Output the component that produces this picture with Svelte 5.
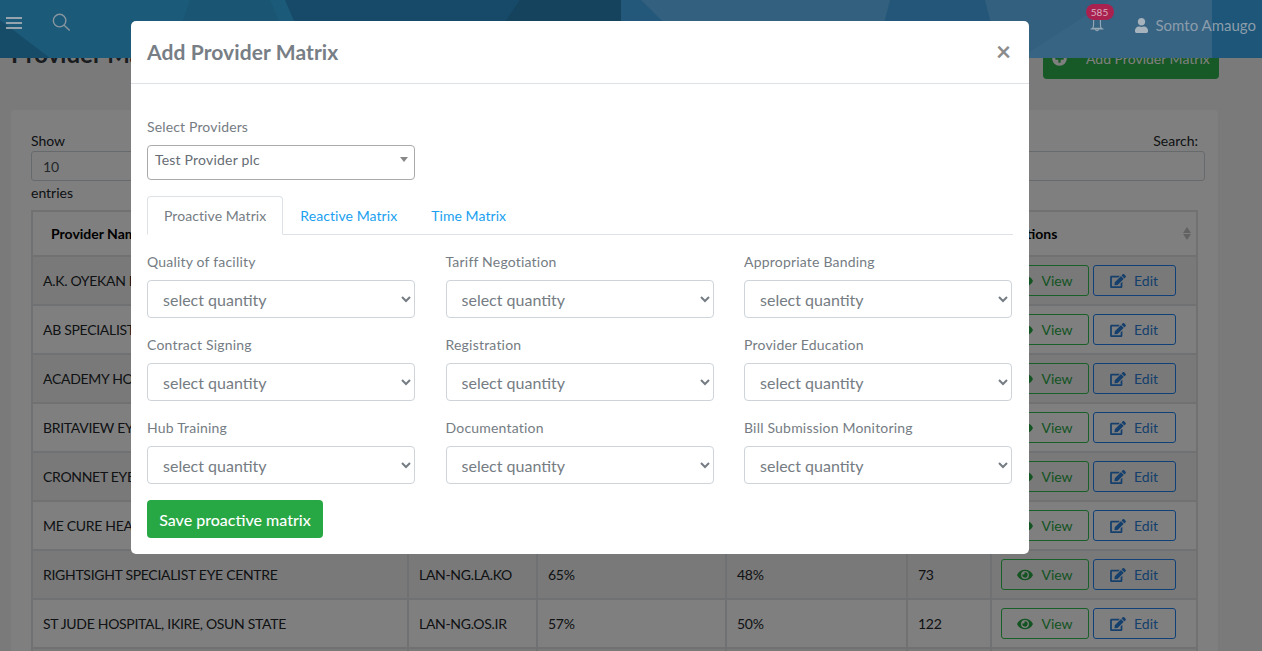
<script>
	const rows = [
		["A.K. OYEKAN EYE CLINIC", "LAN-NG.LA.AK", "62%", "54%", "88"],
		["AB SPECIALIST HOSPITAL", "LAN-NG.LA.AB", "71%", "43%", "64"],
		["ACADEMY HOSPITAL", "LAN-NG.LA.AC", "58%", "47%", "91"],
		["BRITAVIEW EYE CENTRE", "LAN-NG.LA.BR", "66%", "52%", "57"],
		["CRONNET EYE HOSPITAL", "LAN-NG.LA.CR", "60%", "49%", "102"],
		["ME CURE HEALTHCARE", "LAN-NG.LA.ME", "69%", "45%", "80"],
		["RIGHTSIGHT SPECIALIST EYE CENTRE", "LAN-NG.LA.KO", "65%", "48%", "73"],
		["ST JUDE HOSPITAL, IKIRE, OSUN STATE", "LAN-NG.OS.IR", "57%", "50%", "122"]
	]

	const fields = [
		"Quality of facility",
		"Tariff Negotiation",
		"Appropriate Banding",
		"Contract Signing",
		"Registration",
		"Provider Education",
		"Hub Training",
		"Documentation",
		"Bill Submission Monitoring"
	]
</script>

<div class="page">
	<header class="topbar">
		<svg class="topbar-bg" viewBox="0 0 1262 58" preserveAspectRatio="none" aria-hidden="true">
			<rect width="1262" height="58" fill="#1b5a78" />
			<polygon points="0,20 50,58 0,58" fill="#174c69" />
			<polygon points="190,0 270,0 295,58 170,58" fill="#1a5674" />
			<polygon points="285,0 621,0 621,58 310,58" fill="#174a68" />
			<polygon points="520,0 621,0 621,58 480,58" fill="#15425c" />
			<polygon points="621,0 875,0 840,58 621,58" fill="#24587a" />
			<polygon points="641,0 1212,0 1212,58 700,58" fill="#33607f" />
			<polygon points="890,0 985,0 1000,58 875,58" fill="#235678" />
			<polygon points="1020,58 1110,0 1212,0 1212,58" fill="#386483" />
			<rect x="1212" width="50" height="58" fill="#1d5678" />
		</svg>
		<div class="topbar-left">
			<span class="burger"><i></i><i></i><i></i></span>
			<svg class="search" viewBox="0 0 20 20" aria-hidden="true">
				<circle cx="8" cy="8" r="6.6" />
				<line x1="12.8" y1="12.8" x2="18.6" y2="18.4" />
			</svg>
		</div>
		<div class="topbar-right">
			<span class="bell">
				<svg viewBox="0 0 16 16" aria-hidden="true">
					<path d="M3.4 12.4c1-1 1.2-2 1.2-4V1h6.8v7.400c0 2 .2 3 1.200 4zM1.500 13h13M6.600 13.500c0 1.600 2.800 1.600 2.800 0" />
				</svg>
				<span class="badge">585</span>
			</span>
			<span class="user">
				<svg viewBox="0 0 448 512" aria-hidden="true">
					<path d="M224 256c70.700 0 128-57.300 128-128S294.700 0 224 0 96 57.300 96 128s57.300 128 128 128zm89.600 32h-16.700c-22.200 10.200-46.900 16-72.900 16s-50.600-5.800-72.900-16h-16.700C60.200 288 0 348.200 0 422.400V464c0 26.500 21.500 48 48 48h352c26.500 0 48-21.500 48-48v-41.600c0-74.200-60.200-134.400-134.400-134.400z" />
				</svg>
				Somto Amaugo
			</span>
		</div>
	</header>

	<main>
		<div class="title-row">
			<h1>Provider Matrix</h1>
			<button class="add-btn">
				<svg viewBox="0 0 512 512" aria-hidden="true">
					<path d="M256 8C119 8 8 119 8 256s111 248 248 248 248-111 248-248S393 8 256 8zm144 276c0 6.600-5.400 12-12 12h-92v92c0 6.600-5.400 12-12 12h-56c-6.600 0-12-5.400-12-12v-92h-92c-6.600 0-12-5.400-12-12v-56c0-6.600 5.400-12 12-12h92v-92c0-6.600 5.400-12 12-12h56c6.600 0 12 5.400 12 12v92h92c6.600 0 12 5.400 12 12v56z" />
				</svg>
				Add Provider Matrix
			</button>
		</div>

		<section class="card">
			<div class="controls">
				<div class="length">
					<span>Show</span>
					<div class="fake-input">10</div>
					<span class="entries">entries</span>
				</div>
				<div class="filter">
					<span>Search:</span>
					<div class="fake-input"></div>
				</div>
			</div>
			<table>
				<colgroup>
					<col style="width: 376px" />
					<col style="width: 129px" />
					<col style="width: 189px" />
					<col style="width: 181px" />
					<col style="width: 84px" />
					<col />
				</colgroup>
				<thead>
					<tr>
						<th>Provider Name</th>
						<th>Code</th>
						<th>Proactive</th>
						<th>Reactive</th>
						<th>Time</th>
						<th class="sortable">Actions<span class="sort"><i></i><i></i></span></th>
					</tr>
				</thead>
				<tbody>
					{#each rows as row}
						<tr>
							{#each row as cell}
								<td>{cell}</td>
							{/each}
							<td class="actions">
								<button class="outline view">
									<svg viewBox="0 0 576 512" aria-hidden="true">
										<path d="M572.520 241.400C518.290 135.590 410.930 64 288 64S57.680 135.640 3.480 241.410a32.350 32.350 0 0 0 0 29.190C57.710 376.410 165.070 448 288 448s230.320-71.640 284.520-177.410a32.350 32.350 0 0 0 0-29.190zM288 400a144 144 0 1 1 144-144 143.930 143.930 0 0 1-144 144zm0-240a95.310 95.310 0 0 0-25.310 3.790 47.850 47.850 0 0 1-66.900 66.900A95.780 95.780 0 1 0 288 160z" />
									</svg>
									View
								</button>
								<button class="outline edit">
									<svg viewBox="0 0 576 512" aria-hidden="true">
										<path d="M402.600 83.200l90.200 90.200c3.800 3.800 3.800 10 0 13.800L274.400 405.600l-92.800 10.300c-12.400 1.400-22.900-9.100-21.500-21.500l10.300-92.800L388.800 83.200c3.800-3.800 10-3.800 13.800 0zm162-22.900l-48.800-48.800c-15.200-15.200-39.900-15.200-55.200 0l-35.400 35.400c-3.800 3.800-3.800 10 0 13.800l90.200 90.200c3.800 3.800 10 3.800 13.800 0l35.400-35.400c15.200-15.300 15.200-40 0-55.200zM384 346.200V448H64V128h229.800c3.200 0 6.200-1.300 8.500-3.500l40-40c7.600-7.600 2.200-20.500-8.500-20.500H48C21.500 64 0 85.500 0 112v352c0 26.500 21.500 48 48 48h352c26.500 0 48-21.500 48-48V306.200c0-10.700-12.900-16-20.500-8.500l-40 40c-2.200 2.300-3.500 5.300-3.500 8.500z" />
									</svg>
									Edit
								</button>
							</td>
						</tr>
					{/each}
					<tr>
						<td></td>
						<td></td>
						<td></td>
						<td></td>
						<td></td>
						<td></td>
					</tr>
				</tbody>
			</table>
		</section>
	</main>

	<div class="backdrop"></div>

	<div class="modal">
		<div class="modal-header">
			<h2>Add Provider Matrix</h2>
			<span class="close">×</span>
		</div>
		<div class="modal-body">
			<label class="provider-label" for="provider">Select Providers</label>
			<div class="select2" id="provider">
				Test Provider plc
				<span class="caret"></span>
			</div>

			<nav class="tabs">
				<span class="tab active">Proactive Matrix</span>
				<span class="tab">Reactive Matrix</span>
				<span class="tab">Time Matrix</span>
			</nav>

			<div class="grid">
				{#each fields as field}
					<div class="field">
						<span class="field-label">{field}</span>
						<select>
							<option>select quantity</option>
						</select>
					</div>
				{/each}
			</div>

			<button class="save">Save proactive matrix</button>
		</div>
	</div>
</div>

<style>
	:global(body) {
		margin: 0;
		font-family: "Lato", "Open Sans", sans-serif;
		font-size: 14px;
		color: #212529;
	}

	.page {
		position: relative;
		height: 651px;
		overflow: hidden;
		background: #f5f5f5;
	}

	.topbar {
		position: absolute;
		inset: 0 0 auto 0;
		z-index: 20;
		height: 58px;
		display: flex;
		justify-content: space-between;
		color: #8b9dab;
	}

	.topbar-bg {
		position: absolute;
		inset: 0;
		width: 100%;
		height: 100%;
	}

	.topbar-left,
	.topbar-right {
		position: relative;
		display: flex;
		align-items: flex-start;
	}

	.burger {
		display: flex;
		flex-direction: column;
		gap: 3px;
		margin: 17px 0 0 6px;
		width: 16px;
	}

	.burger i {
		display: block;
		height: 2px;
		background: #98a4ad;
	}

	.search {
		width: 19px;
		height: 19px;
		margin: 13px 0 0 30px;
		fill: none;
		stroke: #8795a1;
		stroke-width: 1.500;
	}

	.bell {
		position: relative;
		width: 16px;
		height: 16px;
		margin: 16px 0 0;
	}

	.bell svg {
		width: 16px;
		height: 16px;
		fill: none;
		stroke: #98a9b6;
		stroke-width: 1.100;
	}

	.badge {
		position: absolute;
		top: -12px;
		left: -3px;
		width: 28px;
		height: 16px;
		border-radius: 8px;
		background: #aa2150;
		color: #d8b0c0;
		font-size: 10px;
		line-height: 16px;
		text-align: center;
	}

	.user {
		display: flex;
		align-items: center;
		gap: 8px;
		margin: 16px 6px 0 30px;
		font-size: 15px;
		line-height: 19px;
	}

	.user svg {
		width: 13px;
		height: 15px;
		fill: #a6b2bc;
	}

	.title-row {
		display: flex;
		justify-content: space-between;
		align-items: flex-start;
		padding: 37px 43px 0 11px;
	}

	h1 {
		margin: 2px 0 0;
		font-size: 24px;
		font-weight: 700;
		color: #343a40;
	}

	.add-btn {
		display: flex;
		align-items: center;
		gap: 19px;
		width: 176px;
		height: 42px;
		padding: 0 9px;
		border: 0;
		border-radius: 4px;
		background: #2eb34e;
		color: #fff;
		font: inherit;
	}

	.add-btn svg {
		width: 15px;
		height: 15px;
		fill: #fff;
	}

	.card {
		margin: 31px 44px 0 11px;
		padding: 20px 20px 0;
		background: #fff;
		border-radius: 4px;
	}

	.controls {
		display: flex;
		justify-content: space-between;
		height: 80px;
		line-height: 21px;
	}

	.length {
		width: 220px;
	}

	.entries {
		display: block;
		margin-top: 1px;
	}

	.filter {
		width: 505px;
		margin-right: -7px;
		padding-right: 7px;
		box-sizing: border-box;
		text-align: right;
	}

	.filter .fake-input {
		margin-right: -7px;
	}

	.fake-input {
		box-sizing: border-box;
		height: 30px;
		padding: 0 11px;
		border: 1px solid #ced4da;
		border-radius: 3px;
		color: #495057;
		line-height: 30px;
		text-align: left;
	}

	table {
		width: 100%;
		table-layout: fixed;
		border-collapse: collapse;
		border: 2px solid #dee2e6;
		margin-top: 0;
	}

	th,
	td {
		box-sizing: border-box;
		padding: 0 10px;
		border: 2px solid #dee2e6;
		text-align: left;
		white-space: nowrap;
		overflow: hidden;
		letter-spacing: -0.3px;
	}

	th {
		height: 45px;
		padding-left: 18px;
		border-bottom: 1px solid #000;
		font-weight: 700;
		color: #000;
		letter-spacing: 0;
	}

	td {
		height: 49px;
	}

	tbody tr:nth-child(odd) td {
		background: #f2f2f2;
	}

	.sortable {
		position: relative;
	}

	.sort {
		position: absolute;
		top: 15px;
		right: 5px;
		display: flex;
		flex-direction: column;
		gap: 1px;
	}

	.sort i {
		display: block;
		width: 0;
		border-left: 4px solid transparent;
		border-right: 4px solid transparent;
		border-bottom: 6px solid #c4c4c4;
	}

	.sort i:last-child {
		border-bottom: 0;
		border-top: 6px solid #c4c4c4;
	}

	td.actions {
		padding: 0 0 0 9px;
		letter-spacing: 0;
	}

	.outline {
		display: inline-flex;
		align-items: center;
		justify-content: center;
		gap: 8px;
		box-sizing: border-box;
		height: 31px;
		padding: 0;
		background: transparent;
		border: 1px solid;
		border-radius: 3px;
		font: inherit;
		vertical-align: middle;
	}

	.outline svg {
		width: 16px;
		height: 14px;
		fill: currentColor;
	}

	.view {
		width: 88px;
		color: #28a745;
		border-color: #30c050;
	}

	.edit {
		width: 83px;
		color: #2b7fd8;
		border-color: #1f80f0;
	}

	.backdrop {
		position: absolute;
		inset: 0;
		z-index: 10;
		background: rgba(0, 0, 0, 0.5);
	}

	.modal {
		position: absolute;
		top: 21px;
		left: 131px;
		z-index: 30;
		width: 898px;
		height: 533px;
		box-sizing: border-box;
		background: #fff;
		border-radius: 5px;
		color: #757c83;
	}

	.modal-header {
		display: flex;
		justify-content: space-between;
		align-items: center;
		box-sizing: border-box;
		height: 63px;
		padding: 0 18px 2px 16px;
		border-bottom: 1px solid #dee2e6;
	}

	h2 {
		margin: 0;
		font-size: 21px;
		font-weight: 700;
		letter-spacing: 0.1px;
		color: #777e85;
	}

	.close {
		font-size: 26px;
		font-weight: 700;
		line-height: 1;
		color: #8c8c8c;
	}

	.modal-body {
		padding: 32px 16px 0;
	}

	.provider-label {
		display: block;
		line-height: 21px;
		margin-bottom: 8px;
		letter-spacing: 0.15px;
	}

	.select2 {
		position: relative;
		box-sizing: border-box;
		width: 268px;
		height: 35px;
		padding-left: 7px;
		border: 1px solid #aaa;
		border-radius: 4px;
		line-height: 28px;
		letter-spacing: 0.2px;
		color: #666d74;
	}

	.caret {
		position: absolute;
		top: 11px;
		right: 6px;
		border-left: 4px solid transparent;
		border-right: 4px solid transparent;
		border-top: 5px solid #888;
	}

	.tabs {
		display: flex;
		margin: 16px 0 0;
		height: 38px;
		border-bottom: 1px solid #dee2e6;
	}

	.tab {
		box-sizing: border-box;
		height: 38px;
		padding: 0 16px;
		line-height: 38px;
		letter-spacing: 0.07px;
		color: #1a9ff0;
		border: 1px solid transparent;
	}

	.tab.active {
		height: 39px;
		border-color: #dee2e6 #dee2e6 #fff;
		border-radius: 4px 4px 0 0;
		background: #fff;
		color: #757c83;
	}

	.grid {
		display: grid;
		grid-template-columns: repeat(3, 268px);
		column-gap: 30.500px;
		row-gap: 16px;
		margin-top: 16px;
	}

	.field-label {
		display: block;
		line-height: 21px;
		margin-bottom: 8px;
		letter-spacing: 0.2px;
	}

	select {
		display: block;
		box-sizing: border-box;
		width: 100%;
		height: 38px;
		padding: 0 11px;
		border: 1px solid #ced4da;
		border-radius: 4px;
		background: #fff;
		color: #757c83;
		font: inherit;
		font-size: 16px;
	}

	.save {
		display: block;
		box-sizing: border-box;
		width: 176px;
		height: 38px;
		margin-top: 16px;
		padding: 0;
		border: 0;
		border-radius: 4px;
		background: #28a745;
		color: #fff;
		font: inherit;
		font-size: 16px;
		font-weight: 500;
	}
</style>
